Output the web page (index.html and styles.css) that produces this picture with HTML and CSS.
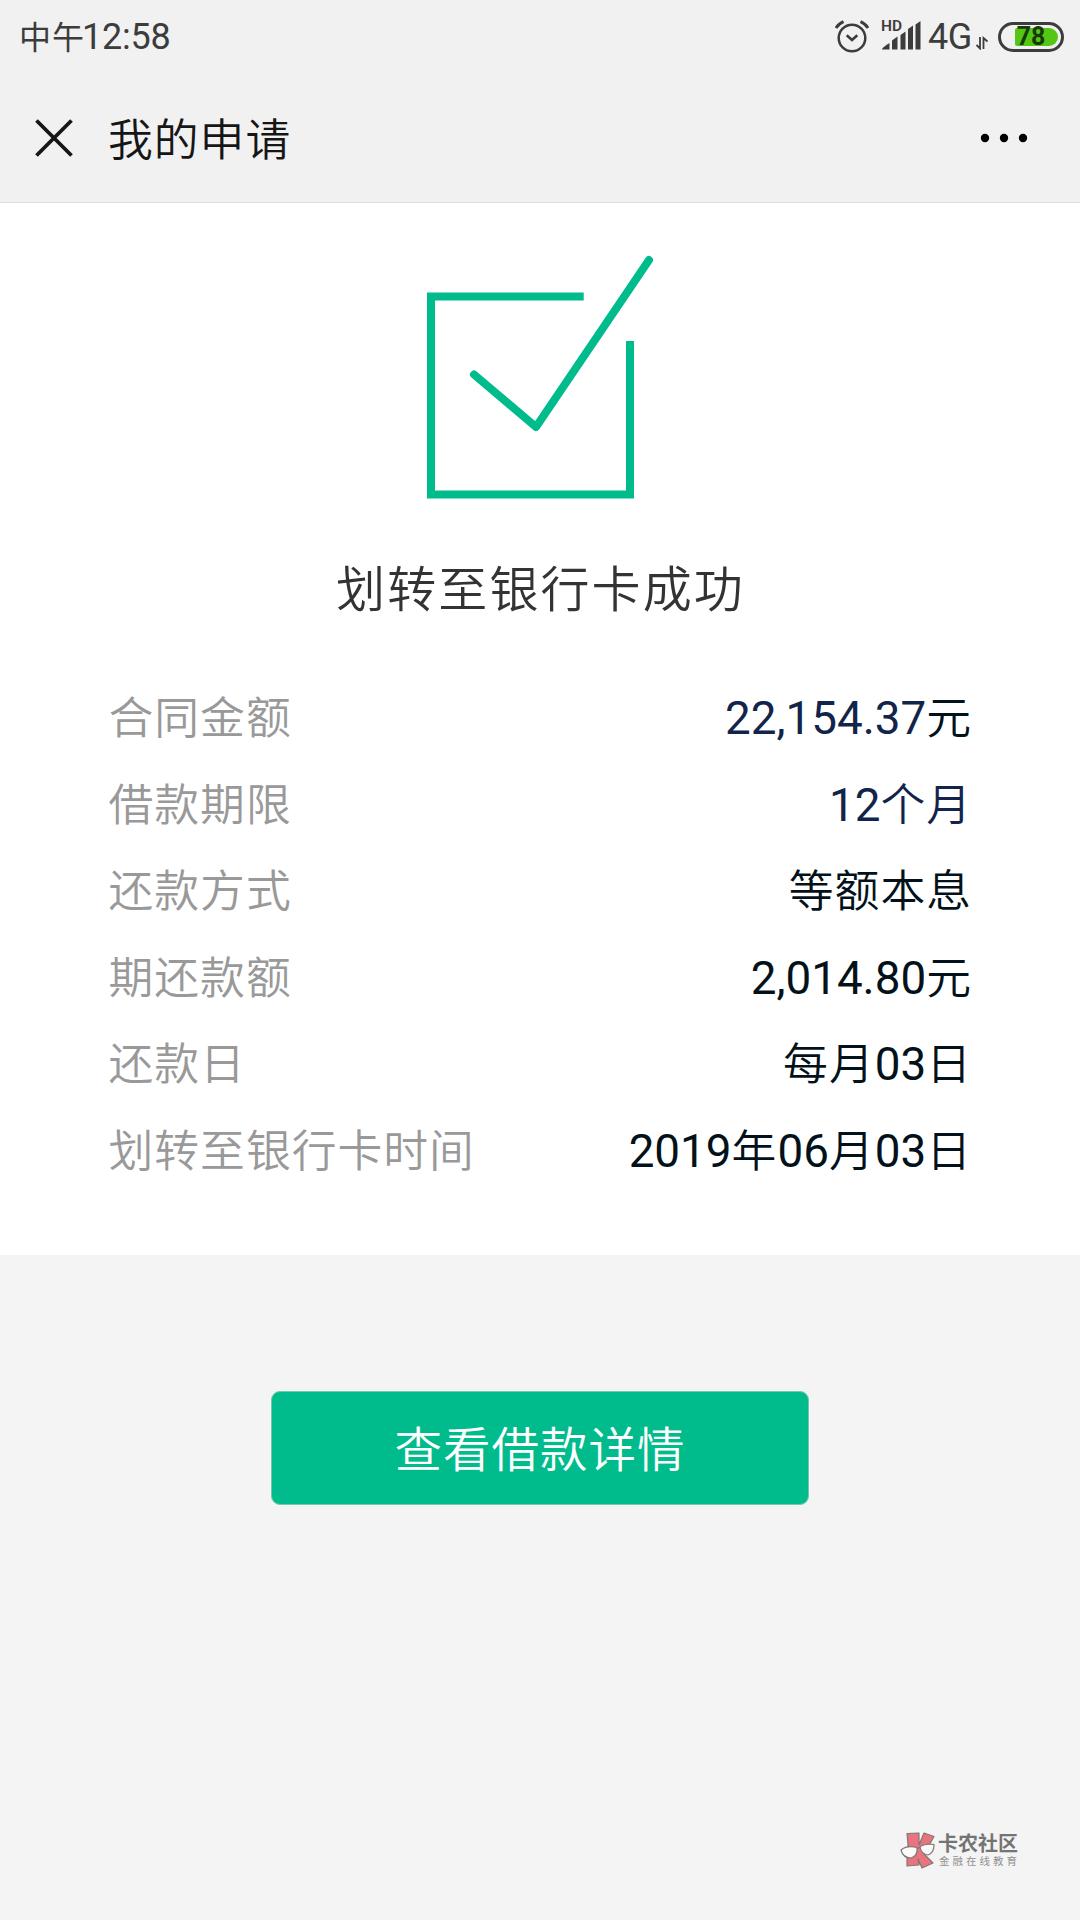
FILE: index.html
```html
<!DOCTYPE html>
<html lang="zh-CN">
<head>
<meta charset="utf-8">
<title>我的申请</title>
<link rel="stylesheet" href="styles.css">
</head>
<body>
<div class="screen">
  <div class="status">
    <div class="clock"><span class="period">中午</span><span class="time">12:58</span></div>
    <div class="indicators">
      <svg class="alarm" width="36" height="36" viewBox="0 0 36 36" fill="none" stroke="#3c3c3c" stroke-width="2.5">
        <circle cx="18" cy="19" r="13.3"/>
        <path d="M12.7 16.2l5.3 4.8 5.3-4.8"/>
        <path d="M2 9Q5 4.500 9.500 2.700M34 9Q31 4.500 26.500 2.700" stroke-width="3"/>
      </svg>
      <div class="signal">
        <span class="hd">HD</span>
        <svg class="bars" width="40" height="30" viewBox="0 0 40 30" fill="#3c3c3c">
          <path d="M1 28.500Q1 26.500 8.500 22V28.500zM11 19.500L16.500 15.500V28.500H11zM19.500 14L24.500 10.500V28.500H19.500zM27 8L32 4.500V28.500H27zM34.500 3.500L39.500 0V28.500H34.500z"/>
        </svg>
      </div>
      <span class="net">4G</span>
      <svg class="arrows" width="14" height="14" viewBox="0 0 14 14" fill="none" stroke="#3c3c3c" stroke-width="1.8">
        <path d="M5 1V12.500L1.500 9M8.500 13V2L12.500 5.500"/>
      </svg>
      <div class="battery"><div class="charge"></div><span class="level">78</span></div>
    </div>
  </div>
  <header class="navbar">
    <svg width="38" height="38" viewBox="0 0 38 38" stroke="#161616" stroke-width="3.8"><path d="M1.500 1.500L36.500 36.500M36.500 1.500L1.500 36.500"/></svg>
    <h1 class="heading">我的申请</h1>
    <svg class="more" width="48" height="10" viewBox="0 0 48 10"><circle cx="5" cy="5" r="4.200"/><circle cx="24" cy="5" r="4.200"/><circle cx="43" cy="5" r="4.200"/></svg>
  </header>
  <main class="panel">
    <svg class="success" width="228" height="246" viewBox="0 0 228 246" fill="none" stroke="#00bb8b" stroke-width="8">
      <path d="M157.700 43.500H5V241.500H108H204V88"/>
      <path d="M48 121.500L110 174L223 7" stroke-linecap="round" stroke-linejoin="round"/>
    </svg>
    <h2 class="result">划转至银行卡成功</h2>
    <dl class="details">
      <div class="row"><dt>合同金额</dt><dd><span class="num navy">22,154.37</span>元</dd></div>
      <div class="row"><dt>借款期限</dt><dd class="navy"><span class="num">12</span>个月</dd></div>
      <div class="row"><dt>还款方式</dt><dd>等额本息</dd></div>
      <div class="row"><dt>期还款额</dt><dd><span class="num">2,014.80</span>元</dd></div>
      <div class="row"><dt>还款日</dt><dd>每月<span class="num">03</span>日</dd></div>
      <div class="row"><dt>划转至银行卡时间</dt><dd><span class="num">2019</span>年<span class="num">06</span>月<span class="num">03</span>日</dd></div>
    </dl>
  </main>
  <button class="primary" type="button">查看借款详情</button>
  <footer class="brand">
    <svg width="36" height="38" viewBox="0 0 36 38" stroke="#827778" stroke-width="1.2" stroke-linejoin="round">
      <path fill="#e8747e" d="M7 1.500L19 1V13L24 1L34 4.500L27 17L24 22L33 31L22 36L18 27L19 33L7 34V24L8 12z"/>
      <path fill="#fbfbfb" d="M1 18Q7 13 17 15.500Q18 24 11 26Q3 26 1 18zM20 14.500Q26 11 34 12.500Q34 21 28 23Q21 22 20 14.500z"/>
      <path fill="none" d="M17 16.500L20 15.500"/>
    </svg>
    <div class="brand-text"><span class="brand-name">卡农社区</span><span class="brand-tag">金融在线教育</span></div>
  </footer>
</div>
</body>
</html>
```
FILE: styles.css
```css
* { box-sizing: border-box; margin: 0; padding: 0; }
body { font-family: Roboto, "Noto Sans CJK SC", sans-serif; font-weight: 400; background: #f4f4f4; }
.screen { width: 1080px; height: 1920px; display: flex; flex-direction: column; align-items: center; overflow: hidden; background: #f4f4f4; }
.status { width: 100%; height: 72px; padding: 0 16px 0 19px; display: flex; justify-content: space-between; background: #f1f1f1; color: #3c3c3c; }
.clock { display: flex; align-items: baseline; line-height: 75px; white-space: nowrap; }
.period { font-size: 32px; letter-spacing: 1px; width: 63px; }
.time { font-size: 36px; letter-spacing: -0.2px; }
.indicators { display: flex; align-items: center; height: 73px; }
.alarm { margin-right: 11px; }
.signal { position: relative; width: 40px; height: 32px; margin-right: 7px; display: flex; align-items: flex-end; }
.bars { position: relative; top: -2px; }
.hd { position: absolute; left: 0; top: -2px; font-size: 15.500px; line-height: 15px; font-weight: 600; }
.net { font-size: 36px; font-weight: 400; line-height: 74px; width: 46px; white-space: nowrap; letter-spacing: -0.5px; }
.arrows { margin: 12px 9px 0 1px; }
.battery { position: relative; width: 66px; height: 30px; border: 3px solid #3c3c3c; border-radius: 15px; padding: 3px; display: flex; justify-content: flex-end; }
.charge { width: 43px; height: 18px; background: #55c614; border-radius: 2px 9px 9px 2px; }
.level { position: absolute; inset: 0; text-align: center; font-size: 25px; line-height: 24px; font-weight: 700; color: #163b08; }
.navbar { width: 100%; height: 131px; display: flex; align-items: center; padding: 1px 52px 0 35px; border-bottom: 1px solid #dedede; background: #f1f1f1; }
.heading { margin-left: 35px; padding-top: 6px; font-size: 44.800px; letter-spacing: 1px; font-weight: 350; line-height: 66px; color: #161616; }
.more { margin-left: auto; }
.panel { width: 100%; height: 1052px; padding-top: 50px; display: flex; flex-direction: column; align-items: center; background: #fff; }
.success { margin-right: 1px; }
.result { margin-top: 54px; font-size: 49px; letter-spacing: 2.100px; padding-left: 1px; line-height: 76px; font-weight: 350; color: #333; }
.details { width: 864px; margin-top: 47px; font-size: 44.800px; letter-spacing: 1px; }
.row { height: 86.500px; display: flex; justify-content: space-between; align-items: center; line-height: 86px; white-space: nowrap; font-weight: 350; }
.row dt { color: #999; padding-left: 0.5px; }
.row dd { color: #03121a; }
.num { font-size: 45.800px; letter-spacing: 0; font-weight: 400; }
.row .navy { color: #13244a; }
.primary { width: 538px; height: 114px; padding-bottom: 4px; margin-top: 136px; border: 1px solid #72c9ac; border-radius: 9px; background: #00bc8c; color: #fff; font-family: inherit; font-size: 47.500px; letter-spacing: 1px; font-weight: 350; flex: none; }
.brand { align-self: flex-end; margin: 327px 60px 0 0; display: flex; gap: 2px; }
.brand-text { display: flex; flex-direction: column; padding-top: 1px; white-space: nowrap; }
.brand-name { font-size: 20px; line-height: 22px; font-weight: 700; color: #747474; }
.brand-tag { font-size: 10.500px; line-height: 14px; letter-spacing: 3px; color: #929292; margin-left: 1px; }
```
